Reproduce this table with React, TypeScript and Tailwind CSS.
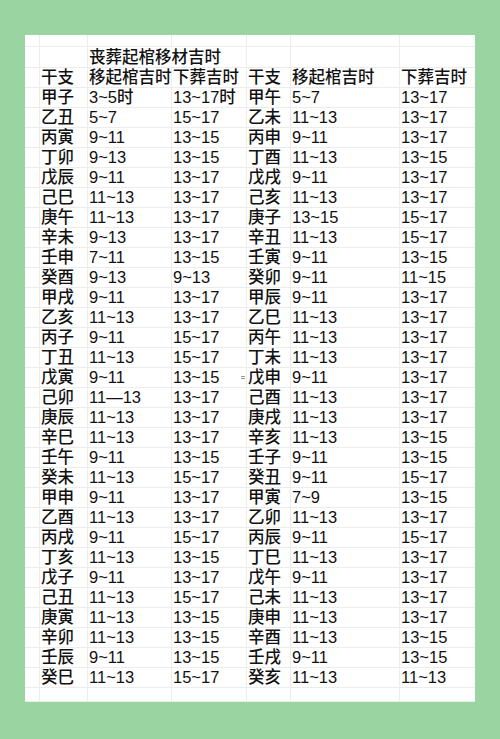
const rows: [string, string, string, string, string, string][] = [
  ["甲子", "3~5时", "13~17时", "甲午", "5~7", "13~17"],
  ["乙丑", "5~7", "15~17", "乙未", "11~13", "13~17"],
  ["丙寅", "9~11", "13~15", "丙申", "9~11", "13~17"],
  ["丁卯", "9~13", "13~15", "丁酉", "11~13", "13~15"],
  ["戊辰", "9~11", "13~17", "戊戌", "9~11", "13~17"],
  ["己巳", "11~13", "13~17", "己亥", "11~13", "13~17"],
  ["庚午", "11~13", "13~17", "庚子", "13~15", "15~17"],
  ["辛未", "9~13", "13~17", "辛丑", "11~13", "15~17"],
  ["壬申", "7~11", "13~15", "壬寅", "9~11", "13~15"],
  ["癸酉", "9~13", "9~13", "癸卯", "9~11", "11~15"],
  ["甲戌", "9~11", "13~17", "甲辰", "9~11", "13~17"],
  ["乙亥", "11~13", "13~17", "乙巳", "11~13", "13~17"],
  ["丙子", "9~11", "15~17", "丙午", "11~13", "13~17"],
  ["丁丑", "11~13", "15~17", "丁未", "11~13", "13~17"],
  ["戊寅", "9~11", "13~15", "戊申", "9~11", "13~17"],
  ["己卯", "11—13", "13~17", "己酉", "11~13", "13~17"],
  ["庚辰", "11~13", "13~17", "庚戌", "11~13", "13~17"],
  ["辛巳", "11~13", "13~17", "辛亥", "11~13", "13~15"],
  ["壬午", "9~11", "13~15", "壬子", "9~11", "13~15"],
  ["癸未", "11~13", "15~17", "癸丑", "9~11", "15~17"],
  ["甲申", "9~11", "13~17", "甲寅", "7~9", "13~15"],
  ["乙酉", "11~13", "13~17", "乙卯", "11~13", "13~17"],
  ["丙戌", "9~11", "15~17", "丙辰", "9~11", "15~17"],
  ["丁亥", "11~13", "13~15", "丁巳", "11~13", "13~17"],
  ["戊子", "9~11", "13~17", "戊午", "9~11", "13~17"],
  ["己丑", "11~13", "15~17", "己未", "11~13", "13~17"],
  ["庚寅", "11~13", "13~15", "庚申", "11~13", "13~17"],
  ["辛卯", "11~13", "13~15", "辛酉", "11~13", "13~15"],
  ["壬辰", "9~11", "13~15", "壬戌", "9~11", "13~15"],
  ["癸巳", "11~13", "15~17", "癸亥", "11~13", "11~13"],
];

const cols = "grid grid-cols-[15px_48px_84px_75px_44px_109px_75px]";
const cell = "border-r border-b border-[#ececec] pl-px whitespace-nowrap overflow-visible";

function Row({ cells, h = "h-[20px]", marker = false }: { cells: string[]; h?: string; marker?: boolean }) {
  return (
    <div className={`${cols} ${h}`}>
      <div className={cell} />
      {cells.map((c, i) => (
        <div key={i} className={`${cell} flex items-center ${i === 5 ? "border-r-0" : ""}`}>
          <span>{c}</span>
          {marker && i === 2 && (
            <span className="ml-auto mr-[1px] flex flex-col gap-[1px]">
              <span className="block w-[4px] h-px bg-[#9a9a9a]" />
              <span className="block w-[4px] h-px bg-[#9a9a9a]" />
            </span>
          )}
        </div>
      ))}
    </div>
  );
}

export default function App() {
  return (
    <div className="h-[739px] w-[500px] bg-[#99d4a1] pt-[35px] pl-[25px] font-['Liberation_Sans','Noto_Sans_CJK_SC',sans-serif] font-medium text-[16.5px] leading-[20px] text-[#111]">
      <div className="w-[450px] h-[667px] bg-white flex flex-col overflow-hidden">
        <Row cells={["", "", "", "", "", ""]} h="h-[12px]" />
        <div className={`${cols} h-[20px]`}>
          <div className={cell} />
          <div className={cell} />
          <div className={`${cell} col-span-2 flex items-center`}>丧葬起棺移材吉时</div>
          <div className={cell} />
          <div className={cell} />
          <div className={`${cell} border-r-0`} />
        </div>
        <Row cells={["干支", "移起棺吉时", "下葬吉时", "干支", "移起棺吉时", "下葬吉时"]} />
        {rows.map((r, i) => (
          <Row key={i} cells={r} marker={i === 14} />
        ))}
        <Row cells={["", "", "", "", "", ""]} h="h-[15px]" />
      </div>
    </div>
  );
}
